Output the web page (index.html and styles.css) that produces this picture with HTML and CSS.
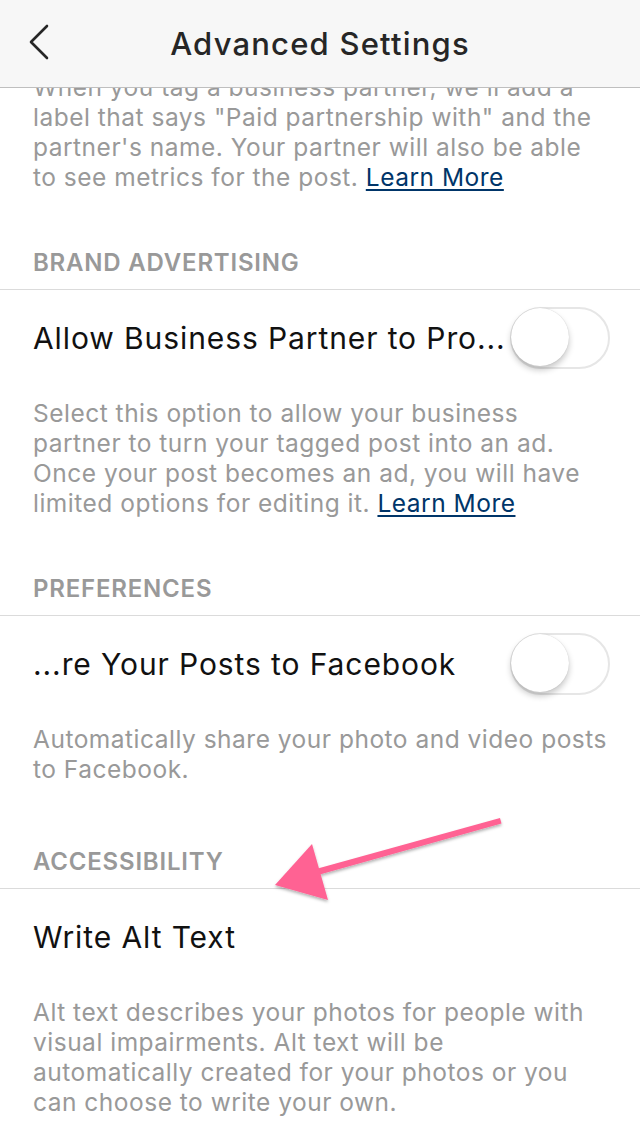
FILE: index.html
```html
<!DOCTYPE html>
<html lang="en">
<head>
    <meta charset="UTF-8">
    <meta name="viewport" content="width=device-width, initial-scale=1.0">
    <title>Advanced Settings</title>
    <link rel="stylesheet" href="styles.css">
</head>
<body>
    <div class="screen">
        <!-- Barra superior -->
        <div class="top-bar">
            <svg class="back" width="22" height="36" viewBox="0 0 22 36">
                <path d="M19 2 L3 18 L19 34" fill="none" stroke="#262626" stroke-width="2.6" stroke-linecap="round" stroke-linejoin="round"/>
            </svg>
            <h1>Advanced Settings</h1>
        </div>

        <div class="content">
            <p class="desc first">When you tag a business partner, we'll add a label that says "Paid partnership with" and the partner's name. Your partner will also be able to see metrics for the post. <a href="#">Learn More</a></p>

            <div class="section">
                <div class="section-title">BRAND ADVERTISING</div>
                <div class="row">
                    <span class="row-label">Allow Business Partner to Pro...</span>
                    <div class="switch"><div class="knob"></div></div>
                </div>
                <p class="desc">Select this option to allow your business partner to turn your tagged post into an ad. Once your post becomes an ad, you will have limited options for editing it. <a href="#">Learn More</a></p>
            </div>

            <div class="section">
                <div class="section-title">PREFERENCES</div>
                <div class="row">
                    <span class="row-label">...re Your Posts to Facebook</span>
                    <div class="switch"><div class="knob"></div></div>
                </div>
                <p class="desc">Automatically share your photo and video posts to Facebook.</p>
            </div>

            <div class="section last">
                <div class="section-title">ACCESSIBILITY</div>
                <div class="row">
                    <span class="row-label">Write Alt Text</span>
                </div>
                <p class="desc">Alt text describes your photos for people with visual impairments. Alt text will be automatically created for your photos or you can choose to write your own.</p>
            </div>
        </div>

        <!-- Flecha rosa sobre el contenido -->
        <svg class="arrow" width="640" height="1136" viewBox="0 0 640 1136">
            <defs>
                <filter id="sombra" x="-20%" y="-20%" width="140%" height="140%">
                    <feDropShadow dx="0" dy="2" stdDeviation="1.5" flood-color="#000" flood-opacity="0.3"/>
                </filter>
            </defs>
            <g filter="url(#sombra)" fill="#ff6293">
                <path d="M500 818 L501.5 823.5 L318 875 L316 869 Z"/>
                <path d="M275 885 L312 844 L328 900 Z"/>
            </g>
        </svg>
    </div>
</body>
</html>
```

FILE: styles.css
```css
body {
    margin: 0;
    font-family: Inter, Roboto, sans-serif;
    background-color: #fff;
    color: #262626;
}
.screen {
    position: relative;
    width: 640px;
    height: 1136px;
    overflow: hidden;
}

/* Barra superior */
.top-bar {
    position: relative;
    z-index: 2;
    height: 88px;
    background-color: #f7f7f7;
    border-bottom: 1px solid #bfbfbf;
    display: flex;
    align-items: center;
    justify-content: center;
    box-sizing: border-box;
}
.top-bar h1 {
    margin: 0;
    font-size: 31px;
    font-weight: 500;
    letter-spacing: 1.2px;
    color: #262626;
}
.back {
    position: absolute;
    left: 28px;
    top: 24px;
}

.content {
    margin-top: -16px;
}
.desc {
    margin: 0;
    padding: 12px 33px 0 33px;
    font-size: 24.5px;
    line-height: 30px;
    letter-spacing: 0.5px;
    color: #999;
}
.desc.first {
    padding-top: 0;
}
.desc a {
    color: #003569;
    text-decoration: underline;
    text-underline-offset: 3px;
}

.section {
    padding-top: 56px;
}
.section.last {
    padding-top: 63px;
}
.section-title {
    padding: 0 33px 11px 33px;
    font-size: 24px;
    line-height: 30px;
    font-weight: 600;
    color: #999;
    letter-spacing: 0.8px;
}
.row {
    border-top: 1px solid #dbdbdb;
    height: 96px;
    display: flex;
    align-items: center;
    justify-content: space-between;
    padding: 0 30px 0 33px;
}
.row-label {
    font-size: 30px;
    letter-spacing: 0.9px;
    color: #111;
    white-space: nowrap;
}

/* Interruptor apagado */
.switch {
    width: 100px;
    height: 62px;
    border-radius: 31px;
    border: 2px solid #e6e6e6;
    box-sizing: border-box;
    background-color: #fff;
    position: relative;
    flex-shrink: 0;
}
.knob {
    position: absolute;
    left: -1px;
    top: -1px;
    width: 58px;
    height: 58px;
    border-radius: 50%;
    background-color: #fff;
    box-shadow: 0 4px 6px rgba(0, 0, 0, 0.22), 0 0 1px rgba(0, 0, 0, 0.2);
}

.arrow {
    position: absolute;
    left: 0;
    top: 0;
    pointer-events: none;
}
```
